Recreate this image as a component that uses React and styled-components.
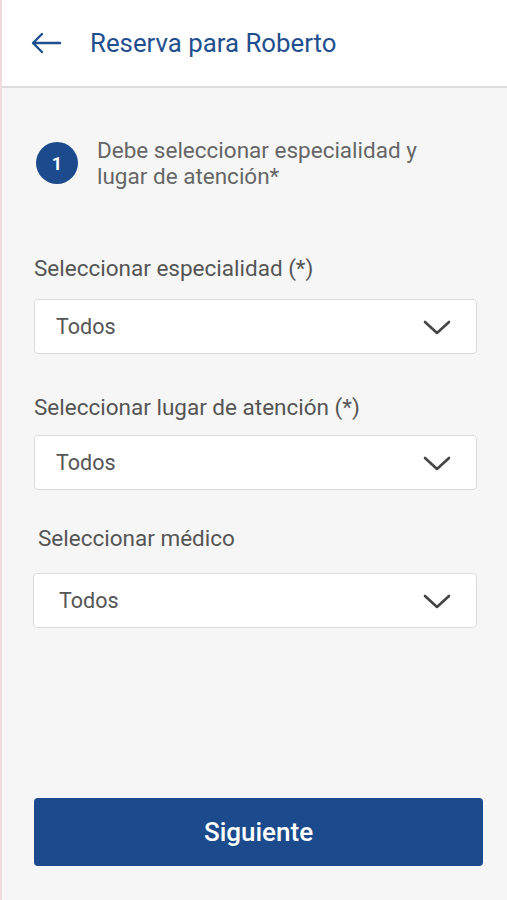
import React from "react"
import styled, { createGlobalStyle } from "styled-components"

const GlobalStyle = createGlobalStyle`
  body {
    margin: 0;
    font-family: Roboto, "Noto Sans", sans-serif;
    background: #f6f6f6;
  }
`

const fields = [
  { label: "Seleccionar especialidad (*)", value: "Todos", inset: 0, top: 66, gap: 17 },
  { label: "Seleccionar lugar de atención (*)", value: "Todos", inset: 0, top: 40, gap: 14 },
  { label: "Seleccionar médico", value: "Todos", inset: 4, top: 35, gap: 21 },
]

export default () => (
  <Page>
    <GlobalStyle />
    <Header>
      <BackButton aria-label="Volver">
        <svg width="32" height="24" viewBox="0 0 32 24" fill="none">
          <path
            d="M30 12H3M12 3L3 12l9 9"
            stroke="#1f4f8e"
            strokeWidth="2.4"
            strokeLinecap="round"
            strokeLinejoin="round"
          />
        </svg>
      </BackButton>
      <Title>Reserva para Roberto</Title>
    </Header>

    <Content>
      <Step>
        <StepBadge>1</StepBadge>
        <StepText>Debe seleccionar especialidad y lugar de atención*</StepText>
      </Step>

      {fields.map(f => (
        <Field key={f.label} top={f.top} gap={f.gap}>
          <Label inset={f.inset}>{f.label}</Label>
          <Select inset={f.inset}>
            <span>{f.value}</span>
            <svg width="30" height="18" viewBox="0 0 30 18" fill="none">
              <path
                d="M3 4l12 11L27 4"
                stroke="#444"
                strokeWidth="2.6"
                strokeLinecap="round"
                strokeLinejoin="round"
              />
            </svg>
          </Select>
        </Field>
      ))}

      <Spacer />
      <NextButton>Siguiente</NextButton>
    </Content>
  </Page>
)

const Page = styled.div`
  min-height: 900px;
  display: flex;
  flex-direction: column;
  border-left: 2px solid #f2dada;
  box-sizing: border-box;
`

const Header = styled.header`
  height: 86px;
  background: #fff;
  border-bottom: 2px solid #dcdcdc;
  display: flex;
  align-items: center;
  padding-left: 28px;
  gap: 28px;
`

const BackButton = styled.div`
  display: flex;
  align-items: center;
`

const Title = styled.h1`
  margin: 0;
  font-size: 25.8px;
  font-weight: 400;
  color: #1f4f8e;
`

const Content = styled.main`
  flex: 1;
  display: flex;
  flex-direction: column;
  padding: 49px 24px 34px 30px;
`

const Step = styled.div`
  display: flex;
  align-items: center;
  gap: 19px;
  padding-left: 4px;
`

const StepBadge = styled.div`
  flex: none;
  width: 42px;
  height: 42px;
  border-radius: 50%;
  background: #1b4b8c;
  color: #fff;
  font-size: 18px;
  font-weight: 700;
  display: flex;
  align-items: center;
  justify-content: center;
`

const StepText = styled.p`
  margin: 0;
  width: 345px;
  font-size: 22.5px;
  line-height: 26px;
  color: #666;
`

const Field = styled.div`
  margin-top: ${p => p.top}px;
  display: flex;
  flex-direction: column;
  gap: ${p => p.gap}px;
  padding-right: 6px;
`

const Label = styled.label`
  font-size: 22.5px;
  line-height: 27px;
  color: #555;
  padding-left: ${p => 2 + p.inset}px;
`

const Select = styled.div`
  height: 55px;
  box-sizing: border-box;
  background: #fff;
  border: 1.5px solid #dcdcdc;
  border-radius: 4px;
  display: flex;
  align-items: center;
  justify-content: space-between;
  padding: 0 24px 0 ${p => 21 + p.inset}px;
  margin-left: ${p => (p.inset ? 1 : 2)}px;
  font-size: 21.5px;
  color: #555;
`

const Spacer = styled.div`
  flex: 1;
`

const NextButton = styled.button`
  height: 68px;
  margin-left: 2px;
  border: none;
  border-radius: 4px;
  background: #1b4b8c;
  color: #fff;
  font-family: Roboto, sans-serif;
  font-size: 26px;
  font-weight: 500;
`
